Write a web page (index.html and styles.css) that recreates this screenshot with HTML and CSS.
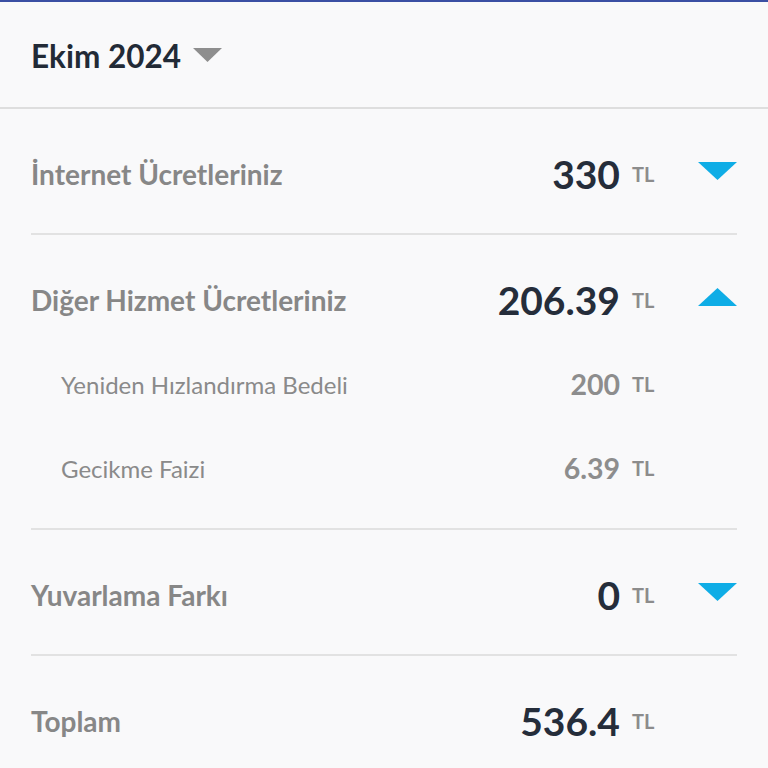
FILE: index.html
```html
<!DOCTYPE html>
<html lang="tr">

<head>
    <meta charset="UTF-8">
    <meta name="viewport" content="width=device-width, initial-scale=1.0">
    <title>Fatura Detayı</title>
    <link rel="stylesheet" href="styles.css">
</head>

<body>
    <div class="topbar"></div>
    <header class="month">
        <span class="month-name">Ekim 2024</span>
        <svg class="caret" width="29" height="14" viewBox="0 0 29 14"><polygon points="0,0 29,0 14.5,14" /></svg>
    </header>

    <section class="bill">
        <div class="row">
            <div class="line">
                <span class="label">İnternet Ücretleriniz</span>
                <span class="amount">330</span>
                <span class="unit">TL</span>
                <svg class="toggle" width="39" height="18" viewBox="0 0 39 18"><polygon points="0,0 39,0 19.5,18" /></svg>
            </div>
        </div>

        <div class="row open">
            <div class="line">
                <span class="label">Diğer Hizmet Ücretleriniz</span>
                <span class="amount">206.39</span>
                <span class="unit">TL</span>
                <svg class="toggle" width="39" height="18" viewBox="0 0 39 18"><polygon points="0,18 39,18 19.5,0" /></svg>
            </div>
            <div class="sub">
                <div class="sub-line">
                    <span class="sub-label">Yeniden Hızlandırma Bedeli</span>
                    <span class="sub-amount">200</span>
                    <span class="unit">TL</span>
                    <span class="toggle"></span>
                </div>
                <div class="sub-line">
                    <span class="sub-label">Gecikme Faizi</span>
                    <span class="sub-amount">6.39</span>
                    <span class="unit">TL</span>
                    <span class="toggle"></span>
                </div>
            </div>
        </div>

        <div class="row">
            <div class="line">
                <span class="label">Yuvarlama Farkı</span>
                <span class="amount">0</span>
                <span class="unit">TL</span>
                <svg class="toggle" width="39" height="18" viewBox="0 0 39 18"><polygon points="0,0 39,0 19.5,18" /></svg>
            </div>
        </div>

        <div class="row total">
            <div class="line">
                <span class="label">Toplam</span>
                <span class="amount">536.4</span>
                <span class="unit">TL</span>
                <span class="toggle"></span>
            </div>
        </div>
    </section>
</body>

</html>
```

FILE: styles.css
```css
body {
    margin: 0;
    padding: 0;
    background: #f9f9fa;
    font-family: "Lato", "Open Sans", sans-serif;
}

.topbar {
    height: 2px;
    background: #3b4fa3;
}

.month {
    display: flex;
    align-items: center;
    box-sizing: border-box;
    height: 107px;
    padding: 3px 31px 0;
    border-bottom: 2px solid #dedede;
}

.month-name {
    font-size: 31.5px;
    font-weight: 700;
    color: #222a36;
}

.caret {
    margin-left: 12px;
    margin-bottom: 2px;
    fill: #8e8e8e;
}

.bill {
    padding: 0 31px;
}

.row {
    padding: 40px 0 34px;
    border-bottom: 2px solid #e2e2e2;
}

.row.open {
    padding-bottom: 18px;
}

.row.total {
    border-bottom: none;
}

.line,
.sub-line {
    display: flex;
    align-items: center;
    height: 50px;
}

.sub {
    margin-top: 17px;
}

.sub-line {
    height: 84px;
}

.label {
    flex: 1;
    font-size: 28px;
    font-weight: 700;
    color: #878787;
}

.sub-label {
    flex: 1;
    padding-left: 30px;
    font-size: 24px;
    font-weight: 400;
    color: #8a8a8a;
}

.amount {
    font-size: 39px;
    font-weight: 700;
    color: #252d3a;
}

.sub-amount {
    font-size: 28.5px;
    font-weight: 700;
    color: #8d8d8d;
}

.unit {
    width: 24px;
    margin-left: 12px;
    font-size: 20px;
    font-weight: 700;
    color: #8c8c8c;
}

.toggle {
    flex: none;
    width: 39px;
    margin-left: 42px;
    margin-bottom: 6px;
    fill: #0fade6;
}
```
